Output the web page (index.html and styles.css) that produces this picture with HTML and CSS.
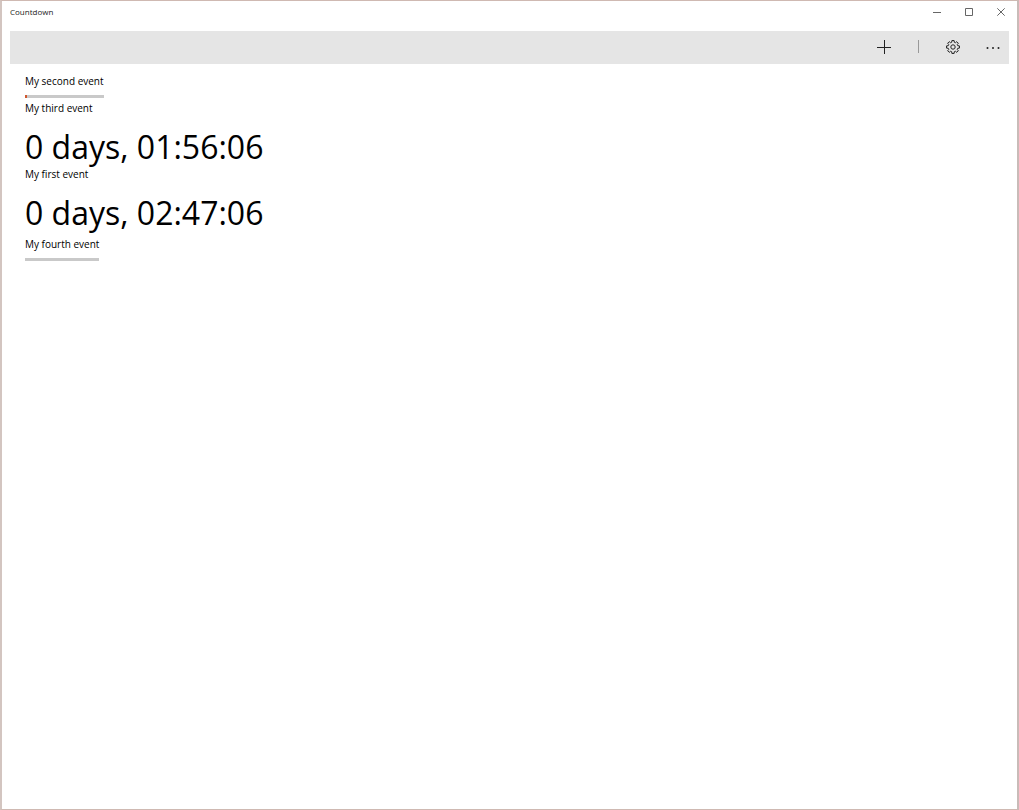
FILE: index.html
```html
<!DOCTYPE html>
<html lang="en">
<head>
<meta charset="utf-8">
<meta name="viewport" content="width=device-width, initial-scale=1">
<title>Countdown</title>
<link rel="stylesheet" href="styles.css">
</head>
<body>
<div class="window">
  <header class="titlebar">
    <h1 class="app-name">Countdown</h1>
    <div class="window-controls">
      <button class="window-button" type="button" aria-label="Minimize"><svg width="8" height="8" viewBox="0 0 8 8"><path d="M0 4.5H8"/></svg></button>
      <button class="window-button" type="button" aria-label="Maximize"><svg width="8" height="8" viewBox="0 0 8 8"><path d="M.5 .5H7.5V7.5H.5Z"/></svg></button>
      <button class="window-button" type="button" aria-label="Close"><svg width="8" height="8" viewBox="0 0 8 8"><path d="M.3 .3L7.7 7.7M7.7 .3L.3 7.7"/></svg></button>
    </div>
  </header>
  <nav class="command-bar" aria-label="Commands">
    <button class="command" type="button" aria-label="Add event"><svg width="14" height="14" viewBox="0 0 14 14"><path d="M7.5 0V14M0 7.5H14"/></svg></button>
    <span class="separator"></span>
    <button class="command" type="button" aria-label="Settings"><svg width="14" height="14" viewBox="0 0 14 14"><path d="M13.43 5.89L13.43 8.11L11.73 8.30L11.26 9.43L12.33 10.76L10.76 12.33L9.43 11.26L8.30 11.73L8.11 13.43L5.89 13.43L5.70 11.73L4.57 11.26L3.24 12.33L1.67 10.76L2.74 9.43L2.27 8.30L.57 8.11L.57 5.89L2.27 5.70L2.74 4.57L1.67 3.24L3.24 1.67L4.57 2.74L5.70 2.27L5.89 .57L8.11 .57L8.30 2.27L9.43 2.74L10.76 1.67L12.33 3.24L11.26 4.57L11.73 5.70Z"/><circle cx="7" cy="7" r="2.2"/></svg></button>
    <button class="command command-more" type="button" aria-label="More"><svg class="dots" width="14" height="14" viewBox="0 0 14 14"><circle cx="1.5" cy="8" r="1"/><circle cx="7" cy="8" r="1"/><circle cx="12.5" cy="8" r="1"/></svg></button>
  </nav>
  <main>
    <ul class="events">
      <li class="event event-progress">
        <label class="event-name" for="second">My second event</label>
        <progress class="bar" id="second" value="2" max="100"></progress>
      </li>
      <li class="event">
        <h2 class="event-name">My third event</h2>
        <time class="remaining">0 days, 01:56:06</time>
      </li>
      <li class="event">
        <h2 class="event-name">My first event</h2>
        <time class="remaining">0 days, 02:47:06</time>
      </li>
      <li class="event event-progress">
        <label class="event-name" for="fourth">My fourth event</label>
        <progress class="bar" id="fourth" value="0" max="100"></progress>
      </li>
    </ul>
  </main>
</div>
</body>
</html>
```

FILE: styles.css
```css
* {
  box-sizing: border-box;
}

body {
  margin: 0;
  color: #000;
  font-family: "Open Sans", "Noto Sans", sans-serif;
}

.window {
  min-height: 100vh;
  padding: 0 8px;
  background: #fff;
  border: 1px solid #cfb9b2;
  border-right: 2px solid #c9bbb8;
  border-left: 2px solid #d3c5c0;
}

.titlebar {
  display: flex;
  justify-content: space-between;
  height: 30px;
}

.app-name {
  margin: 0;
  color: #222;
  font-size: 8px;
  font-weight: 400;
  line-height: 22px;
}

.window-controls {
  display: flex;
  height: 22px;
  margin-right: -8px;
}

.window-button,
.command {
  display: flex;
  align-items: center;
  justify-content: center;
  padding: 0;
  background: none;
  border: 0;
}

.window-button {
  width: 32px;
}

svg {
  display: block;
  fill: none;
  stroke: #666;
  stroke-width: 1;
}

.command svg {
  stroke: #222;
}

.command .dots {
  fill: #222;
  stroke: none;
}

.command-bar {
  display: flex;
  align-items: center;
  justify-content: flex-end;
  height: 33px;
  background: #e5e5e5;
}

.command {
  width: 46px;
  height: 33px;
  padding-bottom: 1px;
}

.command-more {
  width: 33px;
}

.separator {
  width: 1px;
  height: 13px;
  margin: 0 11px 2px;
  background: #999;
}

.events {
  display: flex;
  flex-direction: column;
  align-items: flex-start;
  margin: 0;
  padding: 6px 15px;
  list-style: none;
}

.event {
  display: grid;
  gap: 12px;
}

.event-progress {
  gap: 7px;
  padding: 4px 0 3px;
}

.event-name {
  margin: 0;
  font-size: 10px;
  font-weight: 400;
  line-height: 14px;
}

.remaining {
  font-size: 32px;
  line-height: 40px;
}

.bar {
  display: block;
  width: 0;
  min-width: 100%;
  height: 3px;
  background: #c9c9c9;
  border: 0;
  appearance: none;
}

.bar::-webkit-progress-bar {
  background: #c9c9c9;
}

.bar::-webkit-progress-value {
  background: #d0582f;
}
```
